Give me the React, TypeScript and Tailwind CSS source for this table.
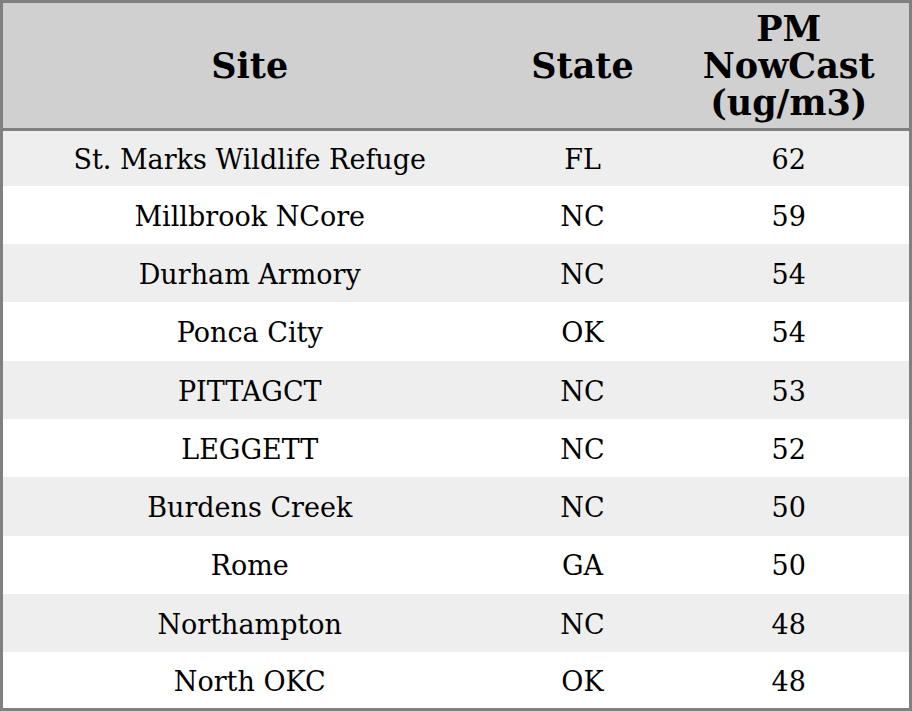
const rows = [
  ['St. Marks Wildlife Refuge', 'FL', '62'],
  ['Millbrook NCore', 'NC', '59'],
  ['Durham Armory', 'NC', '54'],
  ['Ponca City', 'OK', '54'],
  ['PITTAGCT', 'NC', '53'],
  ['LEGGETT', 'NC', '52'],
  ['Burdens Creek', 'NC', '50'],
  ['Rome', 'GA', '50'],
  ['Northampton', 'NC', '48'],
  ['North OKC', 'OK', '48'],
]

export default function App() {
  return (
    <div className="w-[912px] h-[711px] bg-white font-['DejaVu_Serif',serif] text-black">
      <table className="w-full h-full border-collapse border-[3px] border-[#808080] text-center">
        <thead>
          <tr className="bg-[#d0d0d0] h-[128px] border-b-[3px] border-[#808080] text-[35px] leading-[37px] font-bold">
            <th className="w-[495px]">Site</th>
            <th className="w-[172px]">State</th>
            <th>
              PM
              <br />
              NowCast
              <br />
              (ug/m3)
            </th>
          </tr>
        </thead>
        <tbody className="text-[27px]">
          {rows.map((r, i) => (
            <tr
              key={i}
              className={`${i % 2 === 0 ? 'bg-[#eeeeee]' : 'bg-white'} ${i === 0 ? 'h-[56px]' : i === 9 ? 'h-[57px]' : 'h-[58px]'}`}
            >
              <td className="pt-[4px]">{r[0]}</td>
              <td className="pt-[4px]">{r[1]}</td>
              <td className="pt-[4px]">{r[2]}</td>
            </tr>
          ))}
        </tbody>
      </table>
    </div>
  )
}
